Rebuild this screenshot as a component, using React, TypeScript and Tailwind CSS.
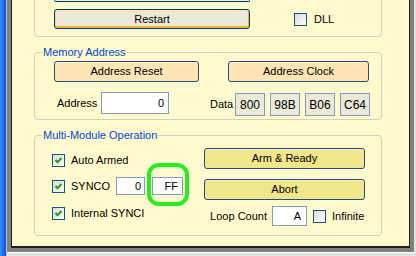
import React from 'react';

function CheckBox({ checked = false }: { checked?: boolean }) {
  return (
    <div className="w-[13px] h-[13px] shrink-0 border border-[#1c5180] bg-linear-to-br from-[#dcdcd7] to-white flex items-center justify-center">
      {checked && (
        <svg width="11" height="11" viewBox="0 0 11 11">
          <polyline points="2.5,5 4.5,7.2 8.5,3" fill="none" stroke="#21a121" strokeWidth="2.2" />
        </svg>
      )}
    </div>
  );
}

function Field({ value, className = '' }: { value: string; className?: string }) {
  return (
    <div className={`shrink-0 bg-white border border-[#7f9db9] flex items-center justify-end pr-[3px] ${className}`}>
      {value}
    </div>
  );
}

function Btn({ label, className = '' }: { label: string; className?: string }) {
  return (
    <div className={`shrink-0 border border-[#1e4f7f] rounded-[3px] flex items-center justify-center ${className}`}>
      {label}
    </div>
  );
}

const legend = 'ml-[7px] px-[1px] leading-[13px] text-[#0046d5]';
const group = 'w-[348px] border border-[#d0d0bf] rounded-[4px]';

export default function App() {
  return (
    <div className="w-[416px] h-[256px] flex overflow-hidden font-['Liberation_Sans',Arial,sans-serif] text-[11px] text-black bg-[#f0f0f0]">
      {/* window border */}
      <div className="w-[6px] h-full bg-linear-to-r from-[#3a8cf8] to-[#0a4ee0]" />
      <div className="w-[1px] h-full bg-[#c4c4c4]" />

      <div className="flex-1 flex flex-col">
        <div className="flex-1 flex bg-[#808080] pl-[4px] pr-[4px] pb-[4px]">
          <div className="flex-1 bg-[#fffacd] border-l border-r border-b-2 border-[#202020] pl-[22px]">
            {/* Top group (cut off) */}
            <div className="w-[348px] border-x border-b border-[#d0d0bf] rounded-b-[4px] pb-[7px]">
              <div className="ml-[19px] w-[196px] h-[2px] border-x border-b border-[#003c74] rounded-b-[2px] bg-[#ece9d8]" />
              <div className="mt-[7px] flex items-center">
                <Btn
                  label="Restart"
                  className="ml-[19px] w-[196px] h-[20px] border-[#003c74] bg-[#ece9d8] shadow-[inset_0_-2px_0_#f5b240,inset_1px_0_0_#fcd68a,inset_-1px_0_0_#f5b240,inset_0_1px_0_#fde5a6]"
                />
                <div className="ml-[44px]"><CheckBox /></div>
                <span className="ml-[7px]">DLL</span>
              </div>
            </div>

            {/* Memory Address */}
            <fieldset className={`${group} mt-[9px]`}>
              <legend className={legend}>Memory Address</legend>
              <div className="pt-[2px] pb-[3px]">
                <div className="flex">
                  <Btn label="Address Reset" className="ml-[19px] w-[145px] h-[21px] bg-[#ffe4b5] shadow-[inset_0_1px_0_#fff1d8]" />
                  <Btn label="Address Clock" className="ml-[29px] w-[141px] h-[21px] bg-[#ffe4b5] shadow-[inset_0_1px_0_#fff1d8]" />
                </div>
                <div className="mt-[10px] h-[24px] flex items-start">
                  <span className="ml-[22px] w-[44px] h-[22px] flex items-center">Address</span>
                  <Field value="0" className="w-[68px] h-[22px] pr-[4px]" />
                  <span className="ml-[41px] w-[25px] h-[24px] flex items-center">Data</span>
                  <div className="mt-[1px] flex gap-[5px] text-[12px]">
                    {['800', '98B', 'B06', 'C64'].map((d) => (
                      <div key={d} className="w-[30px] h-[23px] bg-[#ece9d8] border border-[#7f9db9] flex items-center justify-center">
                        {d}
                      </div>
                    ))}
                  </div>
                </div>
              </div>
            </fieldset>

            {/* Multi-Module Operation */}
            <fieldset className={`${group} mt-[9px]`}>
              <legend className={legend}>Multi-Module Operation</legend>
              <div className="flex pl-[17px] pb-[9px]">
                <div className="w-[152px]">
                  <div className="mt-[9px] h-[18px] flex items-center">
                    <CheckBox checked />
                    <span className="ml-[6px]">Auto Armed</span>
                  </div>
                  <div className="mt-[8px] h-[18px] flex items-center">
                    <CheckBox checked />
                    <span className="ml-[6px] w-[45px]">SYNCO</span>
                    <Field value="0" className="w-[29px] h-[18px]" />
                    <div className="relative ml-[7px]">
                      <Field value="FF" className="w-[31px] h-[18px] pr-[4px]" />
                      <div className="absolute left-[-5px] right-[-6px] top-[-14px] bottom-[-11px] border-[4.5px] border-[#22ee22] rounded-[12px]" />
                    </div>
                  </div>
                  <div className="mt-[9px] h-[18px] flex items-center">
                    <CheckBox checked />
                    <span className="ml-[6px]">Internal SYNCI</span>
                  </div>
                </div>
                <div className="w-[161px]">
                  <Btn label="Arm & Ready" className="mt-[6px] w-[161px] h-[21px] bg-[#f0e68c] shadow-[inset_0_1px_0_#f8f2c4]" />
                  <Btn label="Abort" className="mt-[10px] w-[161px] h-[21px] bg-[#f0e68c] shadow-[inset_0_1px_0_#f8f2c4]" />
                  <div className="mt-[6px] h-[20px] flex items-center">
                    <span className="w-[64px] pr-[1px] text-right">Loop Count</span>
                    <Field value="A" className="ml-[4px] w-[35px] h-[20px] pr-[5px]" />
                    <div className="ml-[6px]"><CheckBox /></div>
                    <span className="ml-[6px]">Infinite</span>
                  </div>
                </div>
              </div>
            </fieldset>
          </div>
        </div>
        <div className="h-[4px] border-t border-white bg-[#e4e2dc]" />
      </div>
      <div className="w-[2px] h-full bg-[#e4e2dc]" />
    </div>
  );
}
